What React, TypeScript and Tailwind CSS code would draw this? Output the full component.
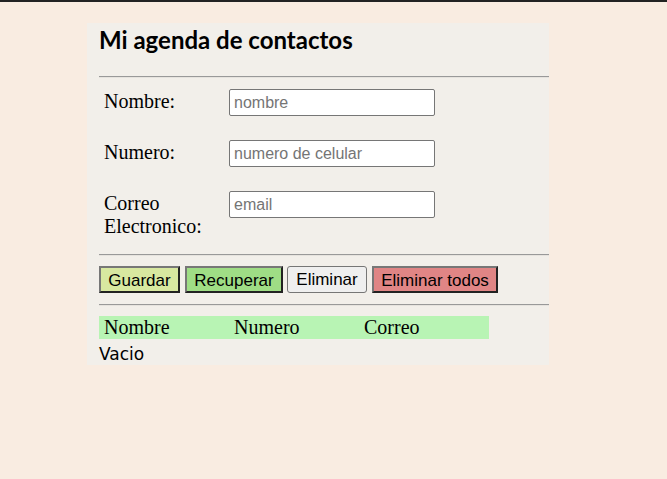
import React from "react";

export default function App() {
  const serif = { fontFamily: '"Liberation Serif", serif' };
  const inputCls =
    "w-[206px] h-[27px] border border-[#767676] rounded-[2px] bg-white px-[4px] text-[16px] placeholder:text-[#757575]";
  const sans = { fontFamily: '"Liberation Sans", Arial, sans-serif' };
  return (
    <div className="w-[667px] h-[479px] bg-[#f9ece1] border-t-2 border-[#222] overflow-hidden">
      <div className="ml-[87px] mt-[21px] w-[462px] h-[342px] bg-[#f2efea] pl-[12px] pt-[4px]">
        <h1 className="font-bold text-[24px] leading-[26px] text-black" style={{ fontFamily: '"Lato", sans-serif' }}>
          Mi agenda de contactos
        </h1>
        <div className="mt-[23px] h-[2px] border-t border-[#999] bg-[#e6e3de]" />
        <div className="flex flex-col gap-[24px] mt-[11px] pl-[5px] text-[20px] leading-[23px] text-black" style={serif}>
          <div className="flex items-start">
            <div className="w-[125px] pt-[1px]">Nombre:</div>
            <input placeholder="nombre" className={inputCls} style={sans} />
          </div>
          <div className="flex items-start">
            <div className="w-[125px] pt-[1px]">Numero:</div>
            <input placeholder="numero de celular" className={inputCls} style={sans} />
          </div>
          <div className="flex items-start">
            <div className="w-[125px] pt-[1px]">
              Correo
              <br />
              Electronico:
            </div>
            <input placeholder="email" className={inputCls} style={sans} />
          </div>
        </div>
        <div className="mt-[16px] h-[2px] border-t border-[#999] bg-[#e6e3de]" />
        <div className="flex items-center mt-[10px] text-[17px] text-black" style={sans}>
          <button className="w-[81px] h-[27px] bg-[#d8e8a0] border-2 border-t-[#777] border-l-[#777] border-b-[#222] border-r-[#222]">
            Guardar
          </button>
          <button className="ml-[5px] w-[98px] h-[27px] bg-[#9fdd85] border-2 border-t-[#777] border-l-[#777] border-b-[#222] border-r-[#222]">
            Recuperar
          </button>
          <button className="ml-[4px] w-[80px] h-[27px] bg-[#efefef] border border-[#767676] rounded-[3px]">
            Eliminar
          </button>
          <button className="ml-[5px] w-[126px] h-[27px] bg-[#e08585] border-2 border-t-[#777] border-l-[#777] border-b-[#222] border-r-[#222]">
            Eliminar todos
          </button>
        </div>
        <div className="mt-[11px] h-[2px] border-t border-[#999] bg-[#e6e3de]" />
        <div className="mt-[10px] w-[390px] h-[23px] bg-[#b8f4b4] grid grid-cols-3 text-[20px] leading-[23px] text-black" style={serif}>
          <div className="pl-[5px]">Nombre</div>
          <div className="pl-[5px]">Numero</div>
          <div className="pl-[5px]">Correo</div>
        </div>
        <div className="text-[17px] leading-[30px] text-black" style={{ fontFamily: '"DejaVu Sans", sans-serif' }}>
          Vacio
        </div>
      </div>
    </div>
  );
}
